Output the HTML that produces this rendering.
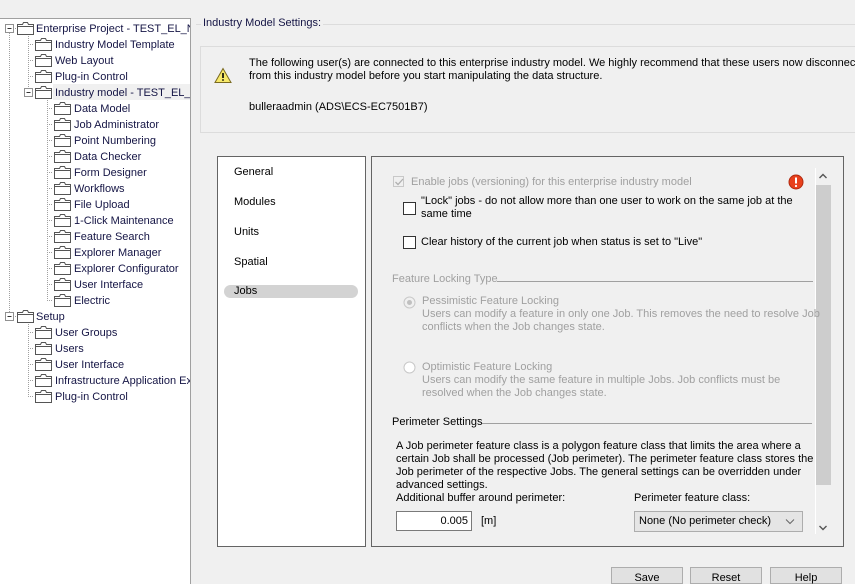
<!DOCTYPE html>
<html><head><meta charset="utf-8"><style>
*{margin:0;padding:0;box-sizing:border-box}
html,body{width:855px;height:584px;overflow:hidden}
body{background:#f0f0f0;font-family:"Liberation Sans",sans-serif;font-size:11px;color:#000;position:relative}
.a{position:absolute;white-space:nowrap}
.tree{position:absolute;left:0;top:18px;width:191px;height:566px;background:#fff;border-top:1px solid #a0a0a0;border-right:1px solid #a0a0a0;overflow:hidden}
.t{position:absolute;white-space:nowrap;color:#151545;font-size:11px;line-height:14px}
.g{color:#a0a0a0}
.cb{position:absolute;width:13px;height:13px;border:1px solid #333;background:#fff}
.btn{position:absolute;top:567px;width:72px;height:24px;border:1px solid #adadad;background:#e1e1e1;text-align:center;line-height:20px}
</style></head><body>
<div class="tree">
<svg width="191" height="566" style="position:absolute;left:0;top:-19px">
<defs><g id="f"><path d="M0.5 2.5h5l1-2h4l1 2h5v10h-16z" fill="#fff" stroke="#555"/><path d="M0.5 4.5h16" stroke="#555"/></g>
<g id="m"><rect x="0.5" y="0.5" width="8" height="8" fill="#fff" stroke="#919191"/><path d="M2.5 4.5h4" stroke="#333"/></g></defs>
<g stroke="#a0a0a0" stroke-dasharray="1 1" fill="none">
<path d="M9.5 33v284M13 28.5h4M28.5 34v58M28 44.5h6M28 60.5h6M28 76.5h6M33 92.5h-1"/>
<path d="M47.5 98v202M47 108.5h6M47 124.5h6M47 140.5h6M47 156.5h6M47 172.5h6M47 188.5h6M47 204.5h6M47 220.5h6M47 236.5h6M47 252.5h6M47 268.5h6M47 284.5h6M47 300.5h6"/>
<path d="M13 316.5h4M28.5 322v74M28 332.5h6M28 348.5h6M28 364.5h6M28 380.5h6M28 396.5h6"/>
</g>
<use href="#m" x="5" y="24"/><use href="#m" x="24" y="88"/><use href="#m" x="5" y="312"/>
<use href="#f" x="17" y="22"/>
<use href="#f" x="35" y="38"/><use href="#f" x="35" y="54"/><use href="#f" x="35" y="70"/><use href="#f" x="35" y="86"/>
<use href="#f" x="54" y="102"/><use href="#f" x="54" y="118"/><use href="#f" x="54" y="134"/><use href="#f" x="54" y="150"/><use href="#f" x="54" y="166"/><use href="#f" x="54" y="182"/><use href="#f" x="54" y="198"/><use href="#f" x="54" y="214"/><use href="#f" x="54" y="230"/><use href="#f" x="54" y="246"/><use href="#f" x="54" y="262"/><use href="#f" x="54" y="278"/><use href="#f" x="54" y="294"/>
<use href="#f" x="17" y="310"/>
<use href="#f" x="35" y="326"/><use href="#f" x="35" y="342"/><use href="#f" x="35" y="358"/><use href="#f" x="35" y="374"/><use href="#f" x="35" y="390"/>
</svg>
<div style="position:absolute;left:53px;top:65px;width:137px;height:16px;background:#f0f0f0"></div>
<div class="t" style="left:36px;top:3px">Enterprise Project - TEST_EL_N</div>
<div class="t" style="left:55px;top:19px">Industry Model Template</div>
<div class="t" style="left:55px;top:35px">Web Layout</div>
<div class="t" style="left:55px;top:51px">Plug-in Control</div>
<div class="t" style="left:55px;top:67px">Industry model - TEST_EL_N</div>
<div class="t" style="left:74px;top:83px">Data Model</div>
<div class="t" style="left:74px;top:99px">Job Administrator</div>
<div class="t" style="left:74px;top:115px">Point Numbering</div>
<div class="t" style="left:74px;top:131px">Data Checker</div>
<div class="t" style="left:74px;top:147px">Form Designer</div>
<div class="t" style="left:74px;top:163px">Workflows</div>
<div class="t" style="left:74px;top:179px">File Upload</div>
<div class="t" style="left:74px;top:195px">1-Click Maintenance</div>
<div class="t" style="left:74px;top:211px">Feature Search</div>
<div class="t" style="left:74px;top:227px">Explorer Manager</div>
<div class="t" style="left:74px;top:243px">Explorer Configurator</div>
<div class="t" style="left:74px;top:259px">User Interface</div>
<div class="t" style="left:74px;top:275px">Electric</div>
<div class="t" style="left:36px;top:291px">Setup</div>
<div class="t" style="left:55px;top:307px">User Groups</div>
<div class="t" style="left:55px;top:323px">Users</div>
<div class="t" style="left:55px;top:339px">User Interface</div>
<div class="t" style="left:55px;top:355px">Infrastructure Application Ext</div>
<div class="t" style="left:55px;top:371px">Plug-in Control</div>
</div>

<div class="a" style="left:196px;top:24px;width:659px;border-top:1px solid #dcdcdc"></div>
<div class="a" style="left:201px;top:17px;background:#f0f0f0;padding:0 2px;color:#151545">Industry Model Settings:</div>

<div class="a" style="left:200px;top:46px;width:660px;height:87px;border:1px solid #dcdcdc"></div>
<svg class="a" style="left:214px;top:67px" width="18" height="17"><path d="M9 1.5L17 15.5H1z" fill="#f7e96a" stroke="#7a6a20"/><path d="M9 6v5" stroke="#000" stroke-width="1.6"/><circle cx="9" cy="13" r="0.9"/></svg>
<div class="a" style="left:249px;top:57px;line-height:13px">The following user(s) are connected to this enterprise industry model. We highly recommend that these users now disconnect<br>from this industry model before you start manipulating the data structure.</div>
<div class="a" style="left:249px;top:101px">bulleraadmin (ADS\ECS-EC7501B7)</div>

<div class="a" style="left:217px;top:156px;width:149px;height:391px;background:#fff;border:1px solid #646464"></div>
<div class="a" style="left:234px;top:166px">General</div>
<div class="a" style="left:234px;top:196px">Modules</div>
<div class="a" style="left:234px;top:226px">Units</div>
<div class="a" style="left:234px;top:256px">Spatial</div>
<div class="a" style="left:224px;top:285px;width:134px;height:13px;background:#d3d3d3;border-radius:7px"></div>
<div class="a" style="left:234px;top:285px">Jobs</div>

<div class="a" style="left:371px;top:156px;width:473px;height:391px;border:1px solid #646464"></div>
<div class="a" style="left:815px;top:168px;width:16px;height:366px;background:#f0f0f0;border-left:1px solid #fff"></div>
<div class="a" style="left:816px;top:185px;width:15px;height:300px;background:#cdcdcd"></div>
<svg class="a" style="left:818px;top:172px" width="10" height="8"><path d="M1.5 6L5 2.5 8.5 6" stroke="#555" stroke-width="1.4" fill="none"/></svg>
<svg class="a" style="left:818px;top:524px" width="10" height="8"><path d="M1.5 2L5 5.5 8.5 2" stroke="#555" stroke-width="1.4" fill="none"/></svg>
<svg class="a" style="left:788px;top:174px" width="16" height="16"><circle cx="8" cy="8" r="7" fill="#e8401c" stroke="#b02a10"/><path d="M8 3.5v6" stroke="#fff" stroke-width="2"/><circle cx="8" cy="12" r="1.1" fill="#fff"/></svg>

<div class="a" style="left:393px;top:176px;width:11px;height:11px;border:1px solid #c8c8c8"></div>
<svg class="a" style="left:394px;top:177px" width="10" height="10"><path d="M1.5 5l2.5 2.5 5-5.5" stroke="#b0b0b0" stroke-width="1.3" fill="none"/></svg>
<div class="a g" style="left:411px;top:176px">Enable jobs (versioning) for this enterprise industry model</div>
<div class="cb" style="left:403px;top:202px"></div>
<div class="a" style="left:421px;top:195px;line-height:13px">"Lock" jobs - do not allow more than one user to work on the same job at the<br>same time</div>
<div class="cb" style="left:403px;top:236px"></div>
<div class="a" style="left:421px;top:236px">Clear history of the current job when status is set to "Live"</div>

<div class="a" style="left:497px;top:281px;width:316px;border-top:1px solid #a0a0a0"></div>
<div class="a g" style="left:392px;top:273px">Feature Locking Type</div>
<svg class="a" style="left:403px;top:296px" width="13" height="13"><circle cx="6.5" cy="6.5" r="5.5" fill="#f0f0f0" stroke="#c8c8c8"/><circle cx="6.5" cy="6.5" r="2.5" fill="#c0c0c0"/></svg>
<div class="a g" style="left:422px;top:295px;line-height:13px">Pessimistic Feature Locking<br>Users can modify a feature in only one Job. This removes the need to resolve Job<br>conflicts when the Job changes state.</div>
<svg class="a" style="left:403px;top:361px" width="13" height="13"><circle cx="6.5" cy="6.5" r="5.5" fill="#fff" stroke="#c8c8c8"/></svg>
<div class="a g" style="left:422px;top:361px;line-height:13px">Optimistic Feature Locking<br>Users can modify the same feature in multiple Jobs. Job conflicts must be<br>resolved when the Job changes state.</div>

<div class="a" style="left:482px;top:423px;width:330px;border-top:1px solid #a0a0a0"></div>
<div class="a" style="left:392px;top:416px">Perimeter Settings</div>
<div class="a" style="left:396px;top:440px;line-height:13px">A Job perimeter feature class is a polygon feature class that limits the area where a<br>certain Job shall be processed (Job perimeter). The perimeter feature class stores the<br>Job perimeter of the respective Jobs. The general settings can be overridden under<br>advanced settings.</div>
<div class="a" style="left:396px;top:492px">Additional buffer around perimeter:</div>
<div class="a" style="left:634px;top:492px">Perimeter feature class:</div>
<div class="a" style="left:396px;top:511px;width:76px;height:20px;background:#fff;border:1px solid #7a7a7a;text-align:right;padding-right:3px;line-height:18px">0.005</div>
<div class="a" style="left:481px;top:515px">[m]</div>
<div class="a" style="left:634px;top:511px;width:169px;height:21px;background:#e5e5e5;border:1px solid #adadad;padding-left:4px;line-height:19px">None (No perimeter check)</div>
<svg class="a" style="left:785px;top:518px" width="10" height="7"><path d="M1 1.5L5 5.5 9 1.5" stroke="#666" fill="none"/></svg>

<div class="btn" style="left:611px;height:17px">Save</div>
<div class="btn" style="left:690px;height:17px">Reset</div>
<div class="btn" style="left:770px;height:17px">Help</div>
</body></html>
